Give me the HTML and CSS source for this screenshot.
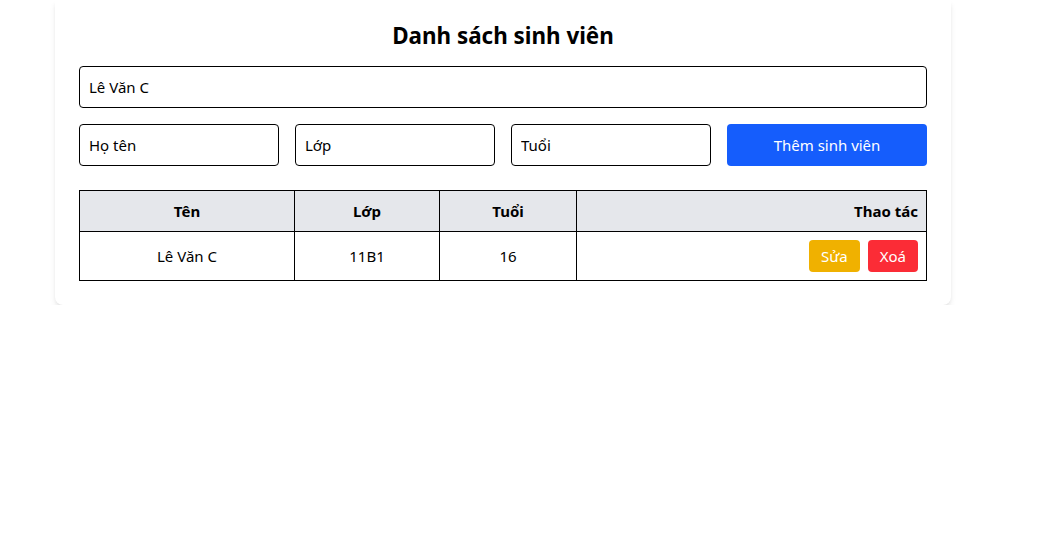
FILE: index.html
```html
<!DOCTYPE html>
<html lang="vi">
<head>
<meta charset="utf-8">
<title>Danh sách sinh viên</title>
<link rel="stylesheet" href="styles.css">
</head>
<body>
<div class="card">
  <h2 class="title">Danh sách sinh viên</h2>
  <input class="field search" type="text" value="Lê Văn C">
  <div class="form-row">
    <input class="field" type="text" placeholder="Họ tên">
    <input class="field" type="text" placeholder="Lớp">
    <input class="field" type="text" placeholder="Tuổi">
    <button class="btn btn-primary">Thêm sinh viên</button>
  </div>
  <table class="table">
    <colgroup>
      <col class="c-name"><col class="c-class"><col class="c-age"><col class="c-act">
    </colgroup>
    <thead>
      <tr><th>Tên</th><th>Lớp</th><th>Tuổi</th><th class="right">Thao tác</th></tr>
    </thead>
    <tbody>
      <tr>
        <td>Lê Văn C</td><td>11B1</td><td>16</td>
        <td class="right"><div class="actions"><button class="btn btn-sm btn-warn">Sửa</button><button class="btn btn-sm btn-danger">Xoá</button></div></td>
      </tr>
    </tbody>
  </table>
</div>
</body>
</html>
```
FILE: styles.css
```css
* { box-sizing: border-box; }
html, body { margin: 0; padding: 0; background: #fff; }
body {
  font-family: "Noto Sans", "Open Sans", sans-serif;
  font-size: 15px;
  line-height: 24px;
  color: #000;
}
.card {
  width: 896px;
  margin-left: 55px;
  padding: 20px 24px 24px;
  background: #fff;
  border-radius: 0 0 8px 8px;
  box-shadow: 0 4px 6px -1px rgba(0,0,0,0.1), 0 2px 4px -2px rgba(0,0,0,0.1);
}
.title {
  margin: 0 0 14px;
  text-align: center;
  font-size: 22.4px;
  line-height: 32px;
  font-weight: 700;
}
.field {
  display: block;
  width: 100%;
  height: 42px;
  padding: 8px 9px;
  border: 1px solid #000;
  border-radius: 4px;
  font: inherit;
  color: #000;
  background: #fff;
  outline: none;
}
.field::placeholder { color: #000; opacity: 1; }
.search { margin-bottom: 16px; }
.form-row {
  display: grid;
  grid-template-columns: repeat(4, 1fr);
  gap: 16px;
  margin-bottom: 24px;
}
.btn {
  font: inherit;
  border: 0;
  border-radius: 4px;
  color: #fff;
  cursor: pointer;
}
.btn-primary { background: #155dfc; height: 42px; }
.table {
  width: 100%;
  border-collapse: collapse;
  table-layout: fixed;
}
.c-name { width: 215px; }
.c-class { width: 145px; }
.c-age { width: 137px; }
.table th, .table td {
  border: 1px solid #000;
  padding: 8px;
  text-align: center;
}
.table th { background: #e5e7eb; font-weight: 700; }
.table .right { text-align: right; }
.actions { display: flex; justify-content: flex-end; gap: 8px; }
.btn-sm { padding: 4px 12px; line-height: 24px; }
.btn-warn { background: #f0b100; }
.btn-danger { background: #fb2c36; }
```
